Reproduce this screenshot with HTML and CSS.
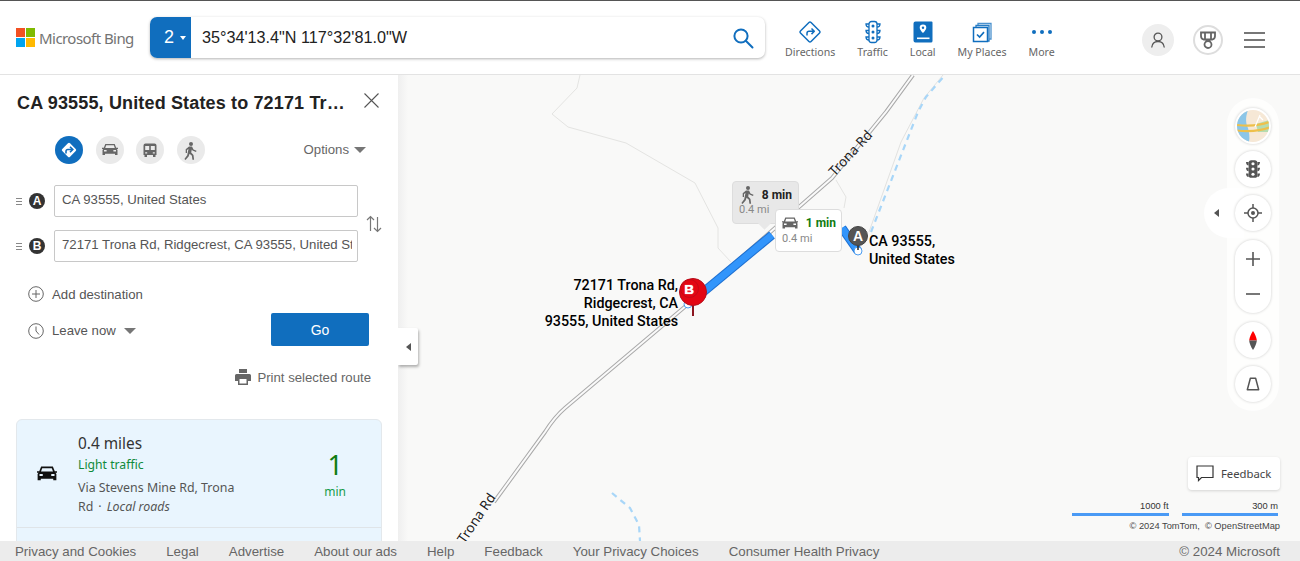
FILE: index.html
```html
<!DOCTYPE html>
<html lang="en">
<head>
<meta charset="utf-8">
<title>Bing Maps</title>
<link rel="stylesheet" href="styles.css">
</head>
<body>
<div class="page">
  <header class="header">
    <div class="logo">
      <svg class="logo-mark" width="19" height="19" viewBox="0 0 19 19"><rect width="9" height="9" fill="#f25022"/><rect x="10" width="9" height="9" fill="#7fba00"/><rect y="10" width="9" height="9" fill="#00a4ef"/><rect x="10" y="10" width="9" height="9" fill="#ffb900"/></svg>
      <span class="logo-text">Microsoft Bing</span>
    </div>
    <div class="search">
      <div class="search-tab"><span>2</span><i class="caret-white"></i></div>
      <div class="search-text">35°34'13.4"N 117°32'81.0"W</div>
      <svg class="search-icon" width="22" height="22" viewBox="0 0 22 22" fill="none" stroke="#106ebe" stroke-width="2"><circle cx="9" cy="9" r="6.6"/><path d="M13.8 13.8 20.5 20.5" stroke-linecap="round"/></svg>
    </div>
    <nav class="nav">
      <a class="nav-item">
        <svg width="24" height="24" viewBox="0 0 24 24" fill="none" stroke="#106ebe" stroke-width="1.5"><rect x="4.500" y="4.500" width="15" height="15" rx="1.500" transform="rotate(45 12 12)"/><path d="M9 15.500v-2.200a2 2 0 0 1 2-2h5M13.500 8.500l2.800 2.800-2.800 2.800" stroke-linejoin="round"/></svg>
        <span>Directions</span>
      </a>
      <a class="nav-item">
        <svg width="24" height="24" viewBox="0 0 24 24" fill="none" stroke="#106ebe" stroke-width="1.300"><rect x="8" y="1.500" width="8" height="21" rx="2.500"/><path d="M8 4H5c0 2 1.200 3 3 3M8 10.500H5c0 2 1.200 3 3 3M8 17H5c0 2 1.200 3 3 3M16 4h3c0 2-1.200 3-3 3M16 10.500h3c0 2-1.200 3-3 3M16 17h3c0 2-1.200 3-3 3"/><g fill="#106ebe" stroke="none"><circle cx="12" cy="6" r="1.500"/><circle cx="12" cy="12" r="1.500"/><circle cx="12" cy="18" r="1.500"/></g></svg>
        <span>Traffic</span>
      </a>
      <a class="nav-item">
        <svg width="24" height="24" viewBox="0 0 24 24"><path d="M2.500 3.500A2 2 0 0 1 4.500 1.500h16a1 1 0 0 1 1 1V21a1.500 1.500 0 0 1-1.500 1.500H4.500a2 2 0 0 1-2-2z" fill="#106ebe"/><rect x="6" y="17.500" width="12.500" height="1.600" fill="#fff"/><path d="M12 4.500a3.300 3.300 0 0 0-3.300 3.300c0 2.200 3.300 5.200 3.300 5.200s3.300-3 3.300-5.200A3.300 3.300 0 0 0 12 4.500z" fill="#fff"/><circle cx="12" cy="7.800" r="1.200" fill="#106ebe"/></svg>
        <span>Local</span>
      </a>
      <a class="nav-item">
        <svg width="24" height="24" viewBox="0 0 24 24" fill="none" stroke="#106ebe" stroke-width="1.300"><path d="M8 5V3.500h13V19h-1.500" opacity=".75"/><path d="M6 7V5.500h13v15.500h-1.500" opacity=".9"/><rect x="3.500" y="7.500" width="14" height="14" fill="#fff" stroke-width="1.500"/><path d="M7 14.500l2.600 2.600 4.400-5" stroke-width="1.600"/></svg>
        <span>My Places</span>
      </a>
      <a class="nav-item">
        <svg width="24" height="24" viewBox="0 0 24 24" fill="#106ebe"><circle cx="4" cy="12" r="2"/><circle cx="12" cy="12" r="2"/><circle cx="20" cy="12" r="2"/></svg>
        <span>More</span>
      </a>
    </nav>
    <div class="account">
      <div class="user-badge"><svg width="18" height="18" viewBox="0 0 18 18" fill="none" stroke="#555" stroke-width="1.300"><circle cx="9" cy="6" r="3.900"/><path d="M2.700 16.500c.4-3.700 3-6 6.300-6s5.900 2.300 6.300 6"/></svg></div>
      <div class="trophy-badge"><svg width="20" height="20" viewBox="0 0 20 20" fill="none" stroke="#666" stroke-width="1.800"><path d="M3 2.500h14v3.500c0 1.700-1 3-2.500 3.500H5.500C4 9 3 7.700 3 6z"/><path d="M7 3v6M13 3v6"/><circle cx="10" cy="14.500" r="3.500"/><path d="M8 10l1 1M12 10l-1 1"/></svg></div>
      <div class="hamburger"><i></i><i></i><i></i></div>
    </div>
  </header>

  <main class="body">
    <aside class="sidebar">
      <div class="title-row">
        <h1 class="title">CA 93555, United States to 72171 Tr…</h1>
        <svg class="close" width="15" height="15" viewBox="0 0 15 15" stroke="#555" stroke-width="1.100"><path d="M.5.500l14 14M14.500.500l-14 14"/></svg>
      </div>
      <div class="modes">
        <span class="mode mode-active"><svg width="28" height="28" viewBox="0 0 28 28"><rect x="8.500" y="8.500" width="11" height="11" rx="1.500" transform="rotate(45 14 14)" fill="#fff"/><path d="M11 17.500v-2.300a1.700 1.700 0 0 1 1.700-1.700h4M15 10.700l2.800 2.800-2.800 2.800" fill="none" stroke="#106ebe" stroke-width="1.600"/></svg></span>
        <span class="mode"><svg width="28" height="28" viewBox="0 0 28 28"><use href="#car" x="6" y="8" fill="#666"/></svg></span>
        <span class="mode"><svg width="28" height="28" viewBox="0 0 28 28" fill="#666"><path d="M7.500 9.500A2 2 0 0 1 9.500 7.500h9a2 2 0 0 1 2 2V19h-1v2H17v-2h-6v2H8.500v-2h-1zM9.200 10v4h4v-4zm5.600 0v4h4v-4zM9.200 16.200v1.300h2v-1.300zm7.600 0v1.300h2v-1.300z" fill-rule="evenodd"/></svg></span>
        <span class="mode"><svg width="28" height="28" viewBox="0 0 28 28"><use href="#walker" x="6" y="6" fill="#666"/></svg></span>
        <span class="options"><span class="options-label">Options</span><i class="caret-grey"></i></span>
      </div>
      <div class="waypoints">
        <div class="waypoint-list">
          <div class="waypoint">
            <span class="grip"><i></i><i></i><i></i></span>
            <span class="letter">A</span>
            <div class="field">CA 93555, United States</div>
          </div>
          <div class="waypoint">
            <span class="grip"><i></i><i></i><i></i></span>
            <span class="letter">B</span>
            <div class="field"><span class="field-clip">72171 Trona Rd, Ridgecrest, CA 93555, United States</span></div>
          </div>
        </div>
        <svg class="swap" width="16" height="18" viewBox="0 0 16 18" fill="none" stroke="#777" stroke-width="1.200"><path d="M4.500 16V1.500M1 5l3.500-3.500L8 5M11.500 2v14.500M8 13l3.500 3.500L15 13"/></svg>
      </div>
      <div class="add-row">
        <svg width="16" height="16" viewBox="0 0 16 16" fill="none" stroke="#666"><circle cx="8" cy="8" r="7.300"/><path d="M8 4v8M4 8h8"/></svg>
        <span>Add destination</span>
      </div>
      <div class="go-row">
        <svg width="16" height="16" viewBox="0 0 16 16" fill="none" stroke="#666"><circle cx="8" cy="8" r="7.300"/><path d="M8 3.500V8l3 3.500"/></svg>
        <span>Leave now</span><i class="caret-grey"></i>
        <button class="go">Go</button>
      </div>
      <div class="print-row">
        <svg width="16" height="16" viewBox="0 0 16 16" fill="#666"><path d="M4 0h8v4H4zM1.500 5h13A1.500 1.500 0 0 1 16 6.500V12h-3v4H3v-4H0V6.500A1.500 1.500 0 0 1 1.500 5zM4.500 10v4.500h7V10z" fill-rule="evenodd"/></svg>
        <span>Print selected route</span>
      </div>
      <section class="route-card">
        <div class="route-main">
          <svg class="route-car" width="20" height="16" viewBox="0 0 16 12"><use href="#car" fill="#111"/></svg>
          <div class="route-info">
            <div class="route-dist">0.4 miles</div>
            <div class="route-traffic">Light traffic</div>
            <div class="route-via">Via Stevens Mine Rd, Trona Rd<span class="route-sep">·</span><em>Local roads</em></div>
          </div>
          <div class="route-time"><b>1</b><span>min</span></div>
        </div>
      </section>
    </aside>

    <section class="map">
      <svg class="map-art" width="902" height="466" viewBox="398 75 902 466" fill="none">
        <defs>
          <g id="car"><path d="M3.300 0h9.400l1.500 3.700H16v1.300h-1.200l.7 1V11h-2.500V9.800h-10V11H.5V6l.7-1H0V3.700h1.800zM4.200 1.300 3.200 4h9.600l-1-2.700zM2 6v1.600h2.600V6zm9.400 0v1.600H14V6z" fill-rule="evenodd"/></g>
          <g id="walker"><circle cx="8" cy="2" r="2"/><path d="M6 4.500h3l1.500 3 3 1.200-.5 1.300-3.500-1.400-.7-1-.6 3 2.300 2.300.6 4.800h-1.700l-.5-4-2.300-2-1 2.800L2.500 18 1.400 17l2.800-3.800L5.500 7 4 8v3H2.700V7.300z"/></g>
        </defs>
        <path d="M580 75 577 88 552 114 568 127 626 143 695 183 718 228 718 248 731 262M836 180 846 197 844 208" stroke="#e4e4e2"/>
        <path d="M869 232 901 142 924 98 943 75" stroke="#e2e2e0"/>
        <path d="M871 232 918 112 926 97 945 75M612 493 630 508 639 525 640 541" stroke="#a8d6f8" stroke-width="2.200" stroke-dasharray="6 5"/>
        <path d="M494 502 545 432C552 421 558 414 565 408L687 305 832 178 886 112 913 75" stroke="#a9a9a9" stroke-width="4"/>
        <path d="M494 502 545 432C552 421 558 414 565 408L687 305 832 178 886 112 913 75" stroke="#fafafa" stroke-width="2"/>
        <path d="M696 298 772 235" stroke="#1d6fd0" stroke-width="9"/>
        <path d="M696 298 772 235" stroke="#3295fb" stroke-width="7"/>
        <path d="M842 228 858 251" stroke="#1d6fd0" stroke-width="9"/>
        <path d="M842 228 858 251" stroke="#3295fb" stroke-width="7"/>
        <circle cx="858" cy="251" r="4" fill="#fff" stroke="#4b9cf0"/>
        <circle cx="688" cy="304" r="4" fill="#fff" stroke="#4b9cf0"/>
        <path d="M858 250V240" stroke="#222" stroke-width="1.500"/>
        <path d="M693 316V305" stroke="#8c1620" stroke-width="2"/>
      </svg>

      <span class="road-label road-label-top">Trona Rd</span>
      <span class="road-label road-label-bottom">Trona Rd</span>

      <div class="callout callout-walk">
        <svg width="18" height="18" viewBox="0 0 16 18"><use href="#walker" fill="#666"/></svg>
        <b>8 min</b>
        <span>0.4 mi</span>
      </div>
      <div class="callout callout-drive">
        <svg width="16" height="13" viewBox="0 0 16 12"><use href="#car" fill="#666"/></svg>
        <b>1 min</b>
        <span>0.4 mi</span>
      </div>

      <div class="pin pin-a">A</div>
      <div class="pin pin-b"><span>B</span></div>
      <div class="pin-label pin-label-a">CA 93555,<br>United States</div>
      <div class="pin-label pin-label-b">72171 Trona Rd,<br>Ridgecrest, CA<br>93555, United States</div>

      <div class="collapse"><i class="caret-left"></i></div>

      <div class="rail">
        <div class="rail-map"><svg width="32" height="32" viewBox="0 0 32 32"><defs><clipPath id="globe"><circle cx="16" cy="16" r="16"/></clipPath></defs><g clip-path="url(#globe)"><rect width="32" height="32" fill="#f6e8d6"/><path d="M0 0h11c-3 8-2 14 0 18 1 4 2 9 1 14H0z" fill="#8cc6e8"/><path d="M19 14l13-4v12H21z" fill="#b5dcb0"/><path d="M0 15c10 1 22 1 32-3M0 20.500c10 1 22 1 32-3" stroke="#eec04a" stroke-width="2.200" fill="none"/><path d="M18 17l5-12M22 6l4 4" stroke="#fff" stroke-width="1.200" fill="none"/></g></svg></div>
        <div class="rail-btn"><svg width="14" height="18" viewBox="0 0 16 20" fill="#555"><rect x="3" y="0" width="10" height="20" rx="3"/><path d="M0 2h3v4C1 6 0 4 0 2zM0 8.500h3v4c-2 0-3-2-3-4zM0 15h3v4c-2 0-3-2-3-4zM16 2h-3v4c2 0 3-2 3-4zM16 8.500h-3v4c2 0 3-2 3-4zM16 15h-3v4c2 0 3-2 3-4z"/><g fill="#fff"><circle cx="8" cy="4" r="1.800"/><circle cx="8" cy="10" r="1.800"/><circle cx="8" cy="16" r="1.800"/></g></svg></div>
        <div class="rail-btn"><svg width="18" height="18" viewBox="0 0 18 18" fill="none" stroke="#555" stroke-width="1.500"><circle cx="9" cy="9" r="5"/><circle cx="9" cy="9" r="2" fill="#555" stroke="none"/><path d="M9 0v4M9 14v4M0 9h4M14 9h4"/></svg></div>
        <div class="rail-zoom">
          <svg width="16" height="16" viewBox="0 0 16 16" stroke="#555" stroke-width="1.600"><path d="M8 1v14M1 8h14"/></svg>
          <svg width="16" height="16" viewBox="0 0 16 16" stroke="#555" stroke-width="1.600"><path d="M1 8h14"/></svg>
        </div>
        <div class="rail-btn"><svg width="10" height="19" viewBox="0 0 10 22"><path d="M5 0C7 3 9 7 9.500 11H.5C1 7 3 3 5 0z" fill="#f00"/><path d="M.5 11h9C9 15 7 19 5 22 3 19 1 15 .5 11z" fill="#555"/></svg></div>
        <div class="rail-btn"><svg width="14" height="14" viewBox="0 0 16 16" fill="none" stroke="#555" stroke-width="1.700" stroke-linejoin="round"><path d="M5 1.500h6l3.500 13h-13z"/></svg></div>
      </div>
      <div class="rail-tab"><i class="caret-left"></i></div>

      <div class="bottom-right">
        <div class="feedback">
          <svg width="18" height="17" viewBox="0 0 18 17" fill="none" stroke="#333" stroke-width="1.200"><path d="M1 1h16v11.500H5.500L2.500 15.500v-3H1z"/></svg>
          <span>Feedback</span>
        </div>
        <div class="scales">
          <div class="scale scale-ft">1000 ft</div>
          <div class="scale scale-m">300 m</div>
        </div>
        <div class="attribution">© 2024 TomTom, &nbsp;© OpenStreetMap</div>
      </div>
    </section>
  </main>

  <footer class="footer">
    <a>Privacy and Cookies</a><a>Legal</a><a>Advertise</a><a>About our ads</a><a>Help</a><a>Feedback</a><a>Your Privacy Choices</a><a>Consumer Health Privacy</a>
    <span class="copyright">© 2024 Microsoft</span>
  </footer>
</div>
</body>
</html>
```

FILE: styles.css
```css
* { box-sizing: border-box; }
html, body { margin: 0; padding: 0; height: 100%; overflow: hidden; }
body { font-family: "Liberation Sans", Arial, sans-serif; color: #333; background: #fff; }
i { display: block; font-style: normal; }

.page { width: 1300px; height: 561px; display: flex; flex-direction: column; overflow: hidden; }

.header { height: 75px; flex: none; display: flex; align-items: center; border-top: 1px solid #555; border-bottom: 1px solid #e3e3e3; background: #fff; position: relative; z-index: 5; padding-left: 16px; }
.logo { width: 134px; display: flex; align-items: center; gap: 4px; }
.logo-mark { flex: none; }
.logo-text { font: 15px "Noto Sans", sans-serif; color: #737373; white-space: nowrap; letter-spacing: -.55px; }
.search { width: 615px; height: 41px; display: flex; align-items: center; background: #fff; border-radius: 7px; box-shadow: 0 1px 3px rgba(0,0,0,.3); overflow: hidden; }
.search-tab { width: 41px; height: 100%; background: #106ebe; color: #fff; font-size: 18px; display: flex; align-items: center; justify-content: center; gap: 6px; padding-left: 9px; flex: none; }
.caret-white { width: 0; height: 0; border: 3px solid transparent; border-top: 4px solid #fff; border-bottom: 0; }
.search-text { flex: 1; font-size: 16.2px; color: #222; padding-left: 11px; }
.search-icon { margin-right: 11px; }

.nav { display: flex; gap: 22px; margin-left: 20px; }
.nav-item { display: flex; flex-direction: column; align-items: center; font: 10.6px/14px "Noto Sans", sans-serif; color: #666; margin-top: 4px; }
.nav-item svg { display: block; margin-bottom: 1px; }

.account { margin-left: auto; display: flex; align-items: center; padding-right: 35px; margin-top: 4px; }
.user-badge { width: 32px; height: 32px; border-radius: 50%; background: #eee; display: flex; align-items: center; justify-content: center; }
.trophy-badge { width: 30px; height: 30px; border-radius: 50%; border: 2px solid #ddd; display: flex; align-items: center; justify-content: center; margin-left: 19px; }
.hamburger { width: 21px; margin-left: 21px; display: flex; flex-direction: column; gap: 5px; }
.hamburger i { height: 2px; background: #777; }

.body { flex: 1; min-height: 0; display: flex; }

.sidebar { width: 398px; flex: none; background: #fff; padding-top: 1px; overflow: hidden; position: relative; z-index: 3; }
.title-row { display: flex; align-items: center; padding: 15px 19px 0 17px; justify-content: space-between; height: 40px; }
.title { margin: 0; font-size: 18px; font-weight: 700; color: #222; white-space: nowrap; letter-spacing: .15px; }
.close { margin-top: -6px; }
.modes { display: flex; align-items: center; gap: 12.5px; padding: 20px 32px 0 55px; }
.mode { width: 28px; height: 28px; border-radius: 50%; background: #eaeaea; flex: none; }
.mode svg { display: block; }
.mode-active { background: #106ebe; }
.options { margin-left: auto; display: flex; align-items: center; gap: 5px; font-size: 13.2px; color: #666; }
.options-label { margin-top: -2px; }
.caret-grey { width: 0; height: 0; border: 6px solid transparent; border-top: 6px solid #767676; border-bottom: 0; }

.waypoints { display: flex; align-items: center; margin-top: 21px; padding-left: 16px; }
.waypoint-list { width: 342px; display: flex; flex-direction: column; gap: 13px; }
.waypoint { display: flex; align-items: center; height: 32px; }
.grip { width: 6px; display: flex; flex-direction: column; gap: 2px; }
.grip i { height: 1px; background: #888; }
.letter { width: 16px; height: 16px; border-radius: 50%; background: #333; color: #fff; font-size: 12px; font-weight: 700; line-height: 16px; text-align: center; margin-left: 7px; }
.field { width: 304px; height: 32px; margin-left: 9px; border: 1px solid #c8c8c8; border-radius: 2px; font-size: 13.2px; line-height: 28px; color: #555; padding: 0 5px 0 7px; background: #fff; }
.field-clip { display: block; overflow: hidden; white-space: nowrap; }
.swap { margin-left: 8px; }

.add-row { display: flex; align-items: center; gap: 8px; padding-left: 28px; margin-top: 24px; font-size: 13.2px; color: #555; height: 16px; }
.add-row svg { flex: none; }
.go-row { display: flex; align-items: center; gap: 8px; padding-left: 28px; margin-top: 11px; font-size: 13.2px; color: #555; height: 33px; position: relative; }
.go-row span { margin-top: 2px; }
.go-row svg { margin-top: 3px; }
.go-row .caret-grey { margin-top: 3px; }
.go { margin-left: auto; margin-right: 29px; width: 98px; height: 33px; background: #106ebe; color: #fff; border: 0; border-radius: 2px; font: 14px "Liberation Sans", Arial, sans-serif; }

.print-row { display: flex; align-items: center; justify-content: flex-end; gap: 6px; padding-right: 27px; margin-top: 22px; font-size: 13.2px; color: #666; height: 18px; }

.route-card { margin: 33px 16px 0; height: 140px; background: #e9f5fe; border: 1px solid #e3e8ec; border-radius: 6px; font-family: "Noto Sans", sans-serif; }
.route-main { display: flex; height: 108px; border-bottom: 1px solid #dfe4e8; position: relative; padding: 14px 0 0 20px; }
.route-car { margin-top: 32px; flex: none; }
.route-info { width: 165px; margin-left: 21px; }
.route-dist { font-size: 15.4px; line-height: 20px; color: #333; }
.route-traffic { font-size: 12.2px; line-height: 21px; color: #0f8a3a; }
.route-via { font-size: 12.4px; line-height: 19px; color: #555; margin-top: 3px; }
.route-sep { margin: 0 5px; }
.route-time { margin-left: auto; margin-right: 35px; display: flex; flex-direction: column; align-items: center; color: #107c10; margin-top: 13px; }
.route-time b { font-weight: 400; font-size: 27px; line-height: 36px; }
.route-time span { font-size: 12px; line-height: 16px; color: #169c4a; margin-top: 1px; }

.map { flex: 1; position: relative; background: #f9f9f8; overflow: hidden; }
.map::before { content: ""; position: absolute; left: 0; top: 0; bottom: 0; width: 10px; background: linear-gradient(to right, #efefef, #f9f9f8); z-index: 1; }
.map-art { position: absolute; left: 0; top: 0; display: block; }

.road-label { position: absolute; font: 13.5px "Noto Sans", sans-serif; color: #222; white-space: nowrap; text-shadow: 0 0 2px #fff, 0 0 2px #fff; }
.road-label-top { left: 424px; top: 69px; transform: rotate(-47deg); }
.road-label-bottom { left: 50px; top: 434px; transform: rotate(-56deg); }

.callout { position: absolute; display: grid; border-radius: 4px; font: 11px/13px "Roboto", sans-serif; }
.callout svg { display: block; }
.callout b { font-size: 12px; font-weight: 700; text-align: right; }
.callout span { grid-column: 1 / 3; color: #888; }
.callout::after { content: ""; position: absolute; width: 9px; height: 9px; transform: rotate(45deg); bottom: -5px; background: inherit; }
.callout-walk { left: 334px; top: 106px; width: 67px; height: 43px; background: #e8e8e8; border: 1px solid #ddd; padding: 4px 6px; grid-template-columns: 18px 1fr; grid-template-rows: 17px 13px; }
.callout-walk::after { left: 27px; }
.callout-walk b { color: #222; padding-top: 3px; }
.callout-drive { left: 377px; top: 134px; width: 67px; height: 43px; background: #fff; border: 1px solid #ddd; padding: 7px 5px 4px 6px; grid-template-columns: 20px 1fr; grid-template-rows: 15px 13px; z-index: 2; }
.callout-drive::after { display: none; }
.callout-drive b { color: #107c10; }

.pin { position: absolute; border-radius: 50%; display: flex; align-items: center; justify-content: center; font-weight: 700; color: #fff; }
.pin-a { left: 450px; top: 151px; width: 20px; height: 20px; background: #555; font-size: 14px; border: 1px solid #444; }
.pin-b { left: 281px; top: 203px; width: 28px; height: 28px; background: #e30613; border: 1px solid #b5101c; font-size: 13.5px; padding: 0 8px 6px 0; }
.pin-b::before { content: ""; position: absolute; left: 0; top: 0; width: 17px; height: 17px; border-radius: 50%; border: 1px solid #c40a17; }
.pin-b span { text-shadow: 0 0 1px #fff; position: relative; }
.pin-label { position: absolute; font: 500 14.3px/18px "Roboto", sans-serif; color: #000; white-space: nowrap; }
.pin-label-a { left: 471px; top: 157px; }
.pin-label-b { right: 622px; top: 201px; text-align: right; }

.collapse { position: absolute; left: 0; top: 253px; width: 20px; height: 37px; background: #fff; border-radius: 0 2px 2px 0; box-shadow: 1px 2px 3px rgba(0,0,0,.3); display: flex; align-items: center; justify-content: center; z-index: 2; }
.caret-left { width: 0; height: 0; border: 4px solid transparent; border-right: 5px solid #555; border-left: 0; }

.rail { position: absolute; left: 829px; top: 23px; width: 52px; height: 313px; border-radius: 26px; background: rgba(255,255,255,.75); display: flex; flex-direction: column; align-items: center; padding-top: 10px; z-index: 2; }
.rail-map { width: 36px; height: 36px; border-radius: 50%; background: #fff; box-shadow: 0 0 3px rgba(0,0,0,.2); display: flex; align-items: center; justify-content: center; margin-bottom: -1px; }
.rail-btn { width: 36px; height: 36px; border-radius: 50%; background: #fff; box-shadow: 0 0 3px rgba(0,0,0,.2); display: flex; align-items: center; justify-content: center; margin-top: 8px; flex: none; }
.rail-zoom { width: 36px; height: 73px; border-radius: 18px; background: #fff; box-shadow: 0 0 3px rgba(0,0,0,.2); display: flex; flex-direction: column; align-items: center; justify-content: space-between; padding: 11px 0; margin: 9px 0 1px; flex: none; }
.rail-tab { position: absolute; left: 806px; top: 113px; width: 40px; height: 50px; border-radius: 25px 0 0 25px; background: #fff; z-index: 1; display: flex; align-items: center; padding-left: 10px; }

.bottom-right { position: absolute; right: 20px; bottom: 9px; width: 208px; display: flex; flex-direction: column; align-items: flex-end; z-index: 2; }
.feedback { width: 92px; height: 33px; background: #fff; border-radius: 4px; box-shadow: 0 1px 3px rgba(0,0,0,.15); display: flex; align-items: center; gap: 7px; padding-left: 8px; font: 11.3px "Noto Sans", sans-serif; color: #444; }
.scales { display: flex; gap: 13px; margin-top: 10px; width: 208px; padding-right: 2px; }
.scale { width: 97px; font-size: 9.3px; line-height: 12px; text-align: right; color: #333; padding: 0 0 1px; border-bottom: 3px solid #4a9af5; }
.attribution { font-size: 9.3px; line-height: 12px; color: #444; margin-top: 4px; white-space: nowrap; }

.footer { height: 20px; flex: none; background: #ececec; display: flex; align-items: center; gap: 30px; padding: 0 20px 0 15px; font-size: 13.3px; color: #666; position: relative; z-index: 4; }
.copyright { margin-left: auto; }
```
